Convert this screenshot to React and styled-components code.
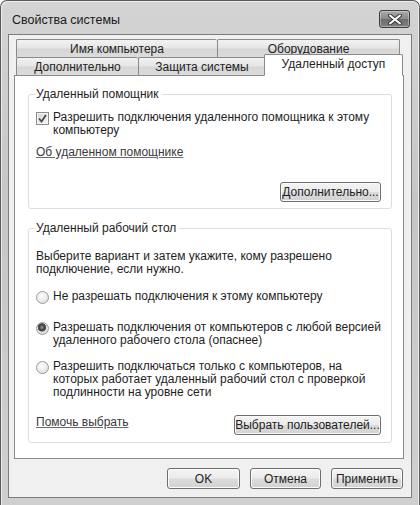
import React, { useState } from 'react';
import styled, { createGlobalStyle } from 'styled-components';

const GlobalStyle = createGlobalStyle`
  html, body {
    margin: 0;
    padding: 0;
    background: #ffffff;
  }
  body {
    font-family: "Liberation Sans", Arial, sans-serif;
    font-size: 12px;
    color: #1e1e1e;
  }
`;

const tabsTop = [
  { label: 'Имя компьютера', width: 201 },
  { label: 'Оборудование', width: 183 },
];

const tabsBottom = [
  { label: 'Дополнительно', width: 122 },
  { label: 'Защита системы', width: 127 },
  { label: 'Удаленный доступ', width: 139, active: true },
];

const modes = [
  { id: 'deny', gap: 14, lines: ['Не разрешать подключения к этому компьютеру'] },
  {
    id: 'any',
    gap: 17,
    lines: ['Разрешать подключения от компьютеров с любой версией', 'удаленного рабочего стола (опаснее)'],
  },
  {
    id: 'nla',
    gap: 13,
    lines: [
      'Разрешить подключаться только с компьютеров, на',
      'которых работает удаленный рабочий стол с проверкой',
      'подлинности на уровне сети',
    ],
  },
];

const CloseIcon = () => (
  <svg width="14" height="11" viewBox="0 0 14 11">
    <path d="M2 1.5 L12 9.5 M12 1.5 L2 9.5" stroke="#3a3a3a" strokeWidth="4" strokeLinecap="round" />
    <path d="M2 1.5 L12 9.5 M12 1.5 L2 9.5" stroke="#ffffff" strokeWidth="2" strokeLinecap="round" />
  </svg>
);

const CheckMark = () => (
  <svg width="9" height="9" viewBox="0 0 9 9">
    <path d="M1 4.5 L3.5 7.5 L8 1" fill="none" stroke="#4a4a4a" strokeWidth="1.8" />
  </svg>
);

const Lines = ({ lines }) =>
  lines.map((l, i) => (
    <React.Fragment key={i}>
      {i > 0 && <br />}
      {l}
    </React.Fragment>
  ));

const App = () => {
  const [allowAssist, setAllowAssist] = useState(true);
  const [mode, setMode] = useState('any');

  return (
    <>
      <GlobalStyle />
      <Window>
        <TitleBar>
          <Title>Свойства системы</Title>
          <CloseButton>
            <CloseIcon />
          </CloseButton>
        </TitleBar>
        <Client>
          <Tabs>
            <TabRow $back>
              {tabsTop.map((t) => (
                <Tab key={t.label} $width={t.width}>
                  {t.label}
                </Tab>
              ))}
            </TabRow>
            <TabRow>
              {tabsBottom.map((t) => (
                <Tab key={t.label} $width={t.width} $active={t.active}>
                  {t.label}
                </Tab>
              ))}
            </TabRow>
          </Tabs>
          <Panel>
            <Group $height={122}>
              <Legend>Удаленный помощник</Legend>
              <OptionRow $top={9} onClick={() => setAllowAssist(!allowAssist)}>
                <CheckBox>{allowAssist && <CheckMark />}</CheckBox>
                <OptionText>
                  <Lines lines={['Разрешить подключения удаленного помощника к этому', 'компьютеру']} />
                </OptionText>
              </OptionRow>
              <LinkText $top={8}>Об удаленном помощнике</LinkText>
              <GroupFooter $top={22}>
                <span />
                <Button $width={101}>Дополнительно...</Button>
              </GroupFooter>
            </Group>
            <Group $height={222} $top={12}>
              <Legend>Удаленный рабочий стол</Legend>
              <Paragraph>
                <Lines lines={['Выберите вариант и затем укажите, кому разрешено', 'подключение, если нужно.']} />
              </Paragraph>
              {modes.map((m) => (
                <OptionRow key={m.id} $top={m.gap} onClick={() => setMode(m.id)}>
                  <Radio $checked={mode === m.id} />
                  <OptionText>
                    <Lines lines={m.lines} />
                  </OptionText>
                </OptionRow>
              ))}
              <GroupFooter $top={16}>
                <LinkText>Помочь выбрать</LinkText>
                <Button $width={147}>Выбрать пользователей...</Button>
              </GroupFooter>
            </Group>
          </Panel>
          <Footer>
            <Button $width={73} $height={21}>OK</Button>
            <Button $width={71} $height={21}>Отмена</Button>
            <Button $width={72} $height={21}>Применить</Button>
          </Footer>
        </Client>
      </Window>
    </>
  );
};

export default App;

const Window = styled.div`
  width: 420px;
  height: 505px;
  box-sizing: border-box;
  border: 1px solid #5a5a5a;
  border-bottom: none;
  border-radius: 7px 7px 0 0;
  background: linear-gradient(180deg, #d4d4d4 0%, #c6c6c6 40%, #cfcfcf 100%);
  box-shadow: inset 1px 1px 0 #ececec, inset -1px 0 0 #ececec;
  display: flex;
  flex-direction: column;
  padding: 0 7px 7px;
`;

const TitleBar = styled.div`
  height: 33px;
  display: flex;
  align-items: flex-start;
  justify-content: space-between;
  padding: 0 2px 0 4px;
`;

const Title = styled.span`
  margin-top: 12px;
  font-size: 12.5px;
  color: #1a1a1a;
`;

const CloseButton = styled.div`
  margin-top: 9px;
  width: 29px;
  height: 16px;
  border: 1px solid #3c3c3c;
  border-radius: 3px;
  background: linear-gradient(180deg, #a9a9a9 0%, #8a8a8a 50%, #6c6c6c 51%, #808080 100%);
  box-shadow: inset 0 0 0 1px rgba(255, 255, 255, 0.35);
  display: flex;
  align-items: center;
  justify-content: center;
`;

const Client = styled.div`
  flex: 1;
  border: 1px solid #7c7c7c;
  background: #f0f0f0;
  padding: 4px 7px 0 5px;
  display: flex;
  flex-direction: column;
`;

const Tabs = styled.div`
  display: flex;
  flex-direction: column;
  padding-left: 2px;
`;

const TabRow = styled.div`
  display: flex;
  height: 18px;
  align-items: flex-end;
  position: relative;
  z-index: ${({ $back }) => ($back ? 0 : 1)};
`;

const Tab = styled.div`
  width: ${({ $width }) => $width}px;
  height: ${({ $active }) => ($active ? '22px' : '18px')};
  margin-bottom: ${({ $active }) => ($active ? '-1px' : '0')};
  margin-left: ${({ $active }) => ($active ? '-1px' : '0')};
  box-sizing: border-box;
  border: 1px solid #8a8a8a;
  border-bottom: ${({ $active }) => ($active ? '1px solid #ffffff' : 'none')};
  border-right: ${({ $active }) => ($active ? '1px solid #8a8a8a' : 'none')};
  border-radius: 2px 2px 0 0;
  background: ${({ $active }) =>
    $active ? '#ffffff' : 'linear-gradient(180deg, #f2f2f2 0%, #e6e6e6 45%, #d6d6d6 55%, #dcdcdc 100%)'};
  display: flex;
  align-items: center;
  justify-content: center;
  padding-bottom: ${({ $active }) => ($active ? '3px' : '0')};
  font-size: 12px;
  color: #1e1e1e;
  white-space: nowrap;
  &:last-child {
    border-right: 1px solid #8a8a8a;
  }
`;

const Panel = styled.div`
  height: 384px;
  box-sizing: border-box;
  border: 1px solid #8a8a8a;
  background: #ffffff;
  padding: 11px 11px 0 13px;
  display: flex;
  flex-direction: column;
`;

const Group = styled.fieldset`
  margin: ${({ $top }) => $top || 0}px 0 0 0;
  height: ${({ $height }) => $height}px;
  box-sizing: border-box;
  border: 1px solid #d5dfe5;
  border-radius: 3px;
  padding: 0 10px 0 7px;
  display: flex;
  flex-direction: column;
  min-width: 0;
`;

const Legend = styled.legend`
  padding: 0 3px 0 1px;
  margin-left: -1px;
  font-size: 12px;
  line-height: 15px;
  color: #1e1e1e;
`;

const OptionRow = styled.div`
  display: flex;
  align-items: flex-start;
  gap: 4px;
  margin-top: ${({ $top }) => $top || 0}px;
  cursor: default;
`;

const CheckBox = styled.div`
  width: 11px;
  height: 11px;
  margin-top: 1px;
  flex-shrink: 0;
  border: 1px solid #8e8e8e;
  background: linear-gradient(135deg, #d8d8d8 0%, #f4f4f4 100%);
  box-shadow: inset 0 0 0 1px #f6f6f6;
  display: flex;
  align-items: center;
  justify-content: center;
`;

const Radio = styled.div`
  width: 11px;
  height: 11px;
  margin-top: 1px;
  flex-shrink: 0;
  border-radius: 50%;
  border: 1px solid #9a9a9a;
  background: ${({ $checked }) =>
    $checked
      ? 'radial-gradient(circle at 45% 40%, #9a9a9a 0%, #3c3c3c 32%, #5a5a5a 44%, #e6e6e6 50%, #d4d4d4 100%)'
      : 'radial-gradient(circle at 40% 35%, #ffffff 0%, #ececec 50%, #d6d6d6 100%)'};
`;

const OptionText = styled.span`
  font-size: 12px;
  line-height: 13px;
  color: #1e1e1e;
  white-space: nowrap;
`;

const LinkText = styled.span`
  margin-top: ${({ $top }) => $top || 0}px;
  font-size: 12px;
  line-height: 15px;
  color: #3a3a3a;
  text-decoration: underline;
  text-decoration-color: #6a6a6a;
  align-self: flex-start;
`;

const Paragraph = styled.p`
  margin: 14px 0 0;
  font-size: 12px;
  line-height: 13px;
  color: #1e1e1e;
  white-space: nowrap;
`;

const GroupFooter = styled.div`
  margin-top: ${({ $top }) => $top}px;
  display: flex;
  justify-content: space-between;
  align-items: center;
`;

const Button = styled.div`
  width: ${({ $width }) => $width}px;
  height: ${({ $height }) => $height || 20}px;
  box-sizing: border-box;
  border: 1px solid #6e6e6e;
  border-radius: 3px;
  background: linear-gradient(180deg, #f4f4f4 0%, #ebebeb 48%, #dcdcdc 52%, #d2d2d2 100%);
  box-shadow: inset 0 0 0 1px #fbfbfb;
  display: flex;
  align-items: center;
  justify-content: center;
  font-size: 12px;
  color: #1e1e1e;
  white-space: nowrap;
`;

const Footer = styled.div`
  display: flex;
  justify-content: flex-end;
  gap: 10px;
  margin-top: 9px;
  padding-right: 1px;
`;
